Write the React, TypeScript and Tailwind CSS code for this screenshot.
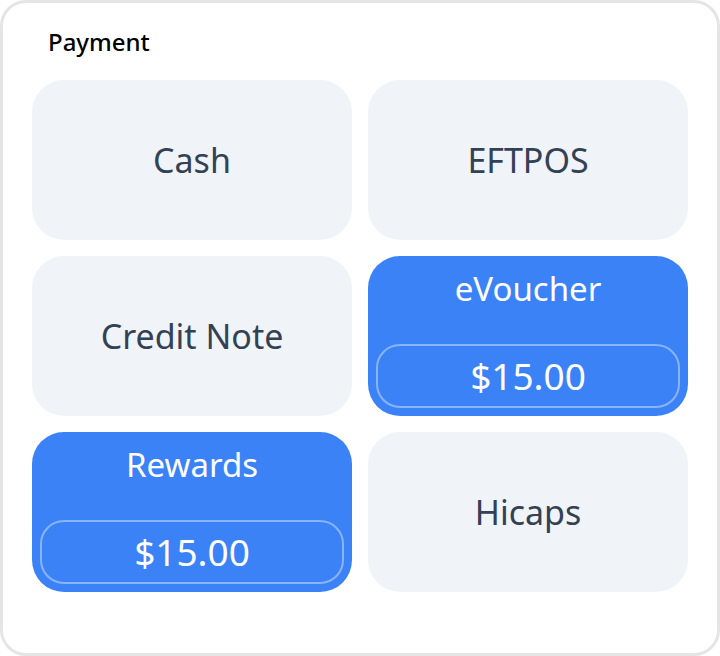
import React from "react";

const font = { fontFamily: '"Noto Sans", "Open Sans", sans-serif' };

function Plain({ label }: { label: string }) {
  return (
    <div className="h-[160px] rounded-[32px] bg-[#f0f4f9] flex items-center justify-center text-[34px] text-[#334155]">
      {label}
    </div>
  );
}

function Active({ label, amount }: { label: string; amount: string }) {
  return (
    <div className="h-[160px] rounded-[32px] bg-[#3b82f6] flex flex-col text-white">
      <div className="pt-[13px] text-center text-[33px] leading-[40px]">{label}</div>
      <div className="mt-auto mx-2 mb-2 h-[64px] rounded-[24px] border-2 border-white/40 flex items-center justify-center text-[37px]">
        {amount}
      </div>
    </div>
  );
}

export default function App() {
  return (
    <div style={font} className="w-[720px] h-[656px] bg-white">
      <div className="w-full h-full border-[3px] border-[#e5e5e5] rounded-[26px] flex flex-col">
        <div className="h-[77px] flex items-center pl-[45px] text-[24px] font-medium text-black">Payment</div>
        <div className="px-[29px] grid grid-cols-2 gap-4">
          <Plain label="Cash" />
          <Plain label="EFTPOS" />
          <Plain label="Credit Note" />
          <Active label="eVoucher" amount="$15.00" />
          <Active label="Rewards" amount="$15.00" />
          <Plain label="Hicaps" />
        </div>
      </div>
    </div>
  );
}
